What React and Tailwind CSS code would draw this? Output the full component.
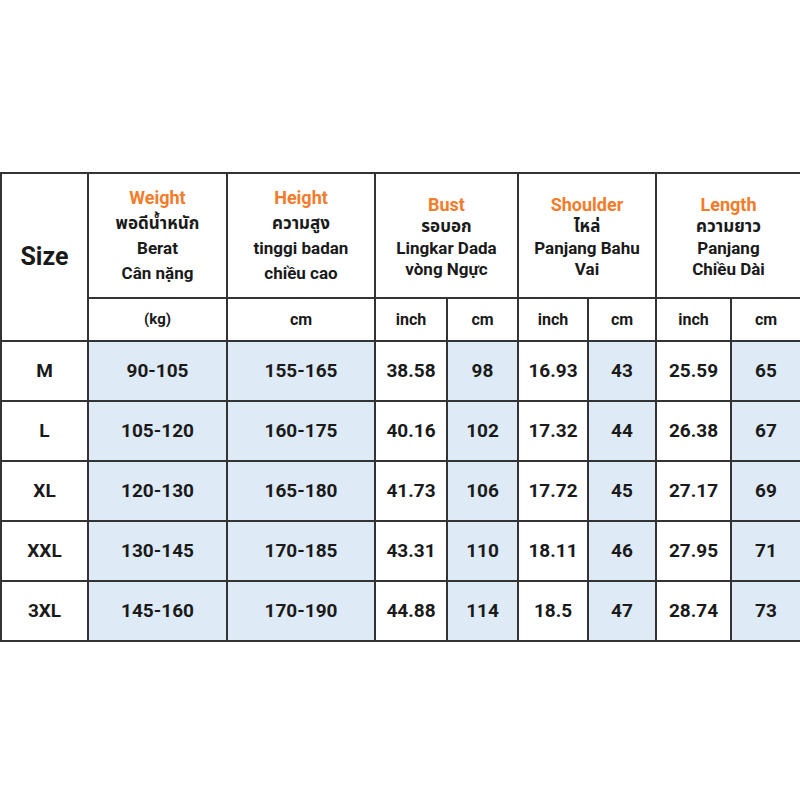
const rows = [
  ["M", "90-105", "155-165", "38.58", "98", "16.93", "43", "25.59", "65"],
  ["L", "105-120", "160-175", "40.16", "102", "17.32", "44", "26.38", "67"],
  ["XL", "120-130", "165-180", "41.73", "106", "17.72", "45", "27.17", "69"],
  ["XXL", "130-145", "170-185", "43.31", "110", "18.11", "46", "27.95", "71"],
  ["3XL", "145-160", "170-190", "44.88", "114", "18.5", "47", "28.74", "73"],
];

// which data columns get the light blue fill
const blue = [false, true, true, false, true, false, true, false, true];

const font = { fontFamily: "Roboto, 'Noto Sans', 'Noto Sans Thai', sans-serif" };

const Head = ({ title, lines, tall }) => (
  <div
    className={
      "bg-white flex flex-col items-center justify-center text-center text-[17px] font-bold text-[#1a1a1a] " +
      (tall ? "leading-[25px]" : "col-span-2 leading-[21.5px] pt-[3px]")
    }
  >
    <div className="text-[18px] text-[#f47b2a] mb-[1px]">{title}</div>
    {lines.map((l) => (
      <div key={l}>{l}</div>
    ))}
  </div>
);

const Cell = ({ children, fill, size }) => (
  <div
    className={
      "flex items-center justify-center font-bold text-[#1a1a1a] " +
      (size || "text-[19px] ") +
      (fill ? "bg-[#deeaf6]" : "bg-white")
    }
  >
    {children}
  </div>
);

export default function App() {
  return (
    <div className="w-[800px] h-[800px] bg-white overflow-hidden pt-[172px]" style={font}>
      <div className="w-[820px] bg-[#333] pl-[2px] py-[2px]">
        <div className="grid gap-[2px] grid-cols-[85px_137px_146px_70px_69px_68px_66px_73px_68px_1fr] grid-rows-[123px_41px_58px_58px_58px_58px_58px]">
          <div className="row-span-2 bg-white flex items-center justify-center text-[25px] font-bold text-[#1a1a1a]">
            Size
          </div>
          <Head tall title="Weight" lines={["พอดีน้ำหนัก", "Berat", "Cân nặng"]} />
          <Head tall title="Height" lines={["ความสูง", "tinggi badan", "chiều cao"]} />
          <Head title="Bust" lines={["รอบอก", "Lingkar Dada", "vòng Ngực"]} />
          <Head title="Shoulder" lines={["ไหล่", "Panjang Bahu", "Vai"]} />
          <Head title="Length" lines={["ความยาว", "Panjang", "Chiều Dài"]} />
          <div className="row-span-7 bg-white" />

          <Cell size="text-[15px] ">(kg)</Cell>
          <Cell size="text-[16px] ">cm</Cell>
          <Cell size="text-[16px] ">inch</Cell>
          <Cell size="text-[16px] ">cm</Cell>
          <Cell size="text-[16px] ">inch</Cell>
          <Cell size="text-[16px] ">cm</Cell>
          <Cell size="text-[16px] ">inch</Cell>
          <Cell size="text-[16px] ">cm</Cell>

          {rows.map((r) =>
            r.map((v, i) => (
              <Cell key={r[0] + i} fill={blue[i]}>
                {v}
              </Cell>
            ))
          )}
        </div>
      </div>
    </div>
  );
}
